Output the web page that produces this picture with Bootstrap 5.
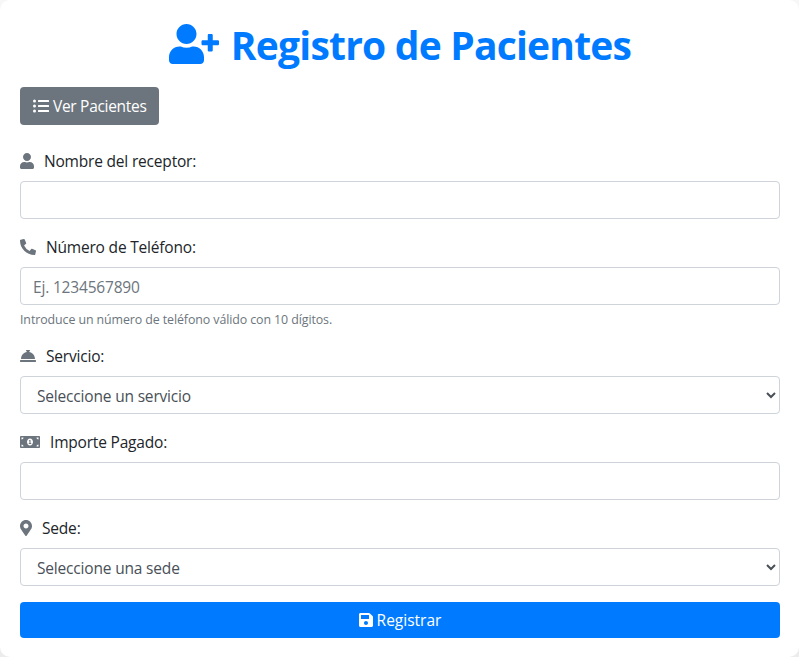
<!DOCTYPE html>
<html lang="es">
<head>
<meta charset="utf-8">
<meta name="viewport" content="width=device-width, initial-scale=1">
<title>Registro de Pacientes</title>
<link href="https://cdn.jsdelivr.net/npm/bootstrap@5.3.0/dist/css/bootstrap.min.css" rel="stylesheet">
<style>
body { background: linear-gradient(#f7f7f7, #ececec); font-family: "Open Sans", "Noto Sans", sans-serif; font-size: 15.5px; line-height: 24px; color: #212529; letter-spacing: -.19px; }
.panel { height: 657px; padding: 21px 19px 19px 20px; border-radius: 10px; }
.title { color: #007bff; font-size: 39px; line-height: 48px; margin-bottom: 18px; letter-spacing: -.79px; }
.title svg { height: 40px; width: 50px; margin: 0 12px 2px 0; }
svg { fill: currentColor; flex: none; }
.ico { height: 16px; color: #6c757d; margin-right: 10px; }
.btn { font-size: 15.5px; line-height: 24px; border-radius: 4px; }
.btn svg { height: 16px; margin-right: 4px; }
.btn-list { background: #6c757d; color: #fff; height: 38px; width: 139px; padding: 6px 12px; margin-bottom: 24px; letter-spacing: -.3px; white-space: nowrap; }
.btn-save { background: #007bff; color: #fff; height: 36px; padding: 6px 12px; }
.form-label { display: flex; align-items: center; height: 24px; }
.form-control { height: 38px; padding: 7px 12px 5px; border: 1px solid #ced4da; border-radius: 4px; font-size: 15.5px; color: #495057; letter-spacing: -.18px; }
.form-control::placeholder { color: #6c757d; }
select.form-control { appearance: auto; }
.hint { font-size: 12.4px; line-height: 19px; margin-top: 5px; height: 18px; color: #6c757d; letter-spacing: -.09px; }
</style>
<script src="https://cdn.jsdelivr.net/npm/bootstrap@5.3.0/dist/js/bootstrap.bundle.min.js"></script>
</head>
<body>
<main class="panel bg-white">
  <h1 class="title fw-bold d-flex align-items-center justify-content-center">
    <svg viewBox="0 0 640 512"><path d="M624 208h-64v-64c0-8.800-7.200-16-16-16h-32c-8.800 0-16 7.200-16 16v64h-64c-8.800 0-16 7.200-16 16v32c0 8.800 7.200 16 16 16h64v64c0 8.800 7.200 16 16 16h32c8.800 0 16-7.200 16-16v-64h64c8.800 0 16-7.200 16-16v-32c0-8.800-7.200-16-16-16zm-400 48c70.700 0 128-57.300 128-128S294.700 0 224 0 96 57.300 96 128s57.300 128 128 128zm89.600 32h-16.700c-22.200 10.200-46.900 16-72.900 16s-50.600-5.800-72.900-16h-16.700C60.200 288 0 348.200 0 422.400V464c0 26.500 21.500 48 48 48h352c26.500 0 48-21.500 48-48v-41.600c0-74.200-60.200-134.400-134.400-134.400z"/></svg>
    <span>Registro de Pacientes</span>
  </h1>
  <a class="btn btn-list d-inline-flex align-items-center" href="#">
    <svg viewBox="0 0 512 512" width="16"><path d="M48 48a48 48 0 1 0 48 48 48 48 0 0 0-48-48zm0 160a48 48 0 1 0 48 48 48 48 0 0 0-48-48zm0 160a48 48 0 1 0 48 48 48 48 0 0 0-48-48zm448 16H176a16 16 0 0 0-16 16v32a16 16 0 0 0 16 16h320a16 16 0 0 0 16-16v-32a16 16 0 0 0-16-16zm0-320H176a16 16 0 0 0-16 16v32a16 16 0 0 0 16 16h320a16 16 0 0 0 16-16V80a16 16 0 0 0-16-16zm0 160H176a16 16 0 0 0-16 16v32a16 16 0 0 0 16 16h320a16 16 0 0 0 16-16v-32a16 16 0 0 0-16-16z"/></svg>
    <span>Ver Pacientes</span>
  </a>
  <form>
    <div class="mb-3">
      <label class="form-label" for="nombre"><svg class="ico" viewBox="0 0 448 512" width="14"><path d="M224 256c70.700 0 128-57.300 128-128S294.700 0 224 0 96 57.300 96 128s57.300 128 128 128zm89.600 32h-16.700c-22.200 10.200-46.900 16-72.900 16s-50.600-5.800-72.900-16h-16.700C60.200 288 0 348.200 0 422.400V464c0 26.500 21.500 48 48 48h352c26.500 0 48-21.500 48-48v-41.600c0-74.200-60.200-134.400-134.400-134.400z"/></svg><span>Nombre del receptor:</span></label>
      <input class="form-control" id="nombre" type="text">
    </div>
    <div class="mb-3">
      <label class="form-label" for="telefono"><svg class="ico" viewBox="0 0 512 512" width="16"><path d="M497.390 361.800l-112-48a24 24 0 0 0-28 6.900l-49.600 60.600A370.660 370.660 0 0 1 130.600 204.110l60.600-49.600a23.940 23.940 0 0 0 6.900-28l-48-112A24.160 24.160 0 0 0 122.600.61l-104 24A24 24 0 0 0 0 48c0 256.500 207.900 464 464 464a24 24 0 0 0 23.400-18.600l24-104a24.290 24.290 0 0 0-14.010-27.600z"/></svg><span>Número de Teléfono:</span></label>
      <input class="form-control" id="telefono" type="tel" placeholder="Ej. 1234567890">
      <div class="hint">Introduce un número de teléfono válido con 10 dígitos.</div>
    </div>
    <div class="mb-3">
      <label class="form-label" for="servicio"><svg class="ico" viewBox="0 0 512 512" width="16"><path d="M288 130.540V112h16c8.840 0 16-7.160 16-16V80c0-8.840-7.160-16-16-16h-96c-8.840 0-16 7.160-16 16v16c0 8.840 7.160 16 16 16h16v18.540C115.490 146.110 32 239.180 32 352h448c0-112.820-83.490-205.890-192-221.460zM496 384H16c-8.840 0-16 7.160-16 16v32c0 8.840 7.160 16 16 16h480c8.840 0 16-7.160 16-16v-32c0-8.840-7.160-16-16-16z"/></svg><span>Servicio:</span></label>
      <select class="form-control" id="servicio"><option>Seleccione un servicio</option></select>
    </div>
    <div class="mb-3">
      <label class="form-label" for="importe"><svg class="ico" viewBox="0 0 640 512" width="20"><path d="M352 288h-16v-88c0-4.420-3.580-8-8-8h-13.580c-4.740 0-9.370 1.400-13.310 4.030l-15.330 10.220a7.994 7.994 0 0 0-2.220 11.090l8.880 13.310a7.994 7.994 0 0 0 11.090 2.220l.47-.31V288h-16c-4.420 0-8 3.580-8 8v16c0 4.420 3.580 8 8 8h64c4.420 0 8-3.580 8-8v-16c0-4.420-3.580-8-8-8zM608 64H32C14.330 64 0 78.330 0 96v320c0 17.670 14.330 32 32 32h576c17.670 0 32-14.330 32-32V96c0-17.670-14.330-32-32-32zM48 400v-64c35.350 0 64 28.650 64 64H48zm0-224v-64h64c0 35.350-28.650 64-64 64zm272 192c-53.020 0-96-50.150-96-112 0-61.860 42.980-112 96-112s96 50.130 96 112c0 61.870-43 112-96 112zm272 32h-64c0-35.350 28.650-64 64-64v64zm0-224c-35.350 0-64-28.650-64-64h64v64z"/></svg><span>Importe Pagado:</span></label>
      <input class="form-control" id="importe" type="text">
    </div>
    <div class="mb-3">
      <label class="form-label" for="sede"><svg class="ico" viewBox="0 0 384 512" width="12"><path d="M172.268 501.670C26.970 291.031 0 269.413 0 192 0 85.961 85.961 0 192 0s192 85.961 192 192c0 77.413-26.970 99.031-172.268 309.670-9.535 13.774-29.930 13.773-39.464 0zM192 272c44.183 0 80-35.817 80-80s-35.817-80-80-80-80 35.817-80 80 35.817 80 80 80z"/></svg><span>Sede:</span></label>
      <select class="form-control" id="sede"><option>Seleccione una sede</option></select>
    </div>
    <button class="btn btn-save border-0 w-100 d-flex align-items-center justify-content-center" type="button">
      <svg viewBox="0 0 448 512" width="14"><path d="M433.941 129.941l-83.882-83.882A48 48 0 0 0 316.118 32H48C21.490 32 0 53.490 0 80v352c0 26.510 21.490 48 48 48h352c26.510 0 48-21.490 48-48V163.882a48 48 0 0 0-14.059-33.941zM224 416c-35.346 0-64-28.654-64-64 0-35.346 28.654-64 64-64s64 28.654 64 64c0 35.346-28.654 64-64 64zm96-304.520V212c0 6.627-5.373 12-12 12H76c-6.627 0-12-5.373-12-12V108c0-6.627 5.373-12 12-12h228.520c3.183 0 6.235 1.264 8.485 3.515l3.480 3.480A11.996 11.996 0 0 1 320 111.480z"/></svg>
      <span>Registrar</span>
    </button>
  </form>
</main>
</body>
</html>
